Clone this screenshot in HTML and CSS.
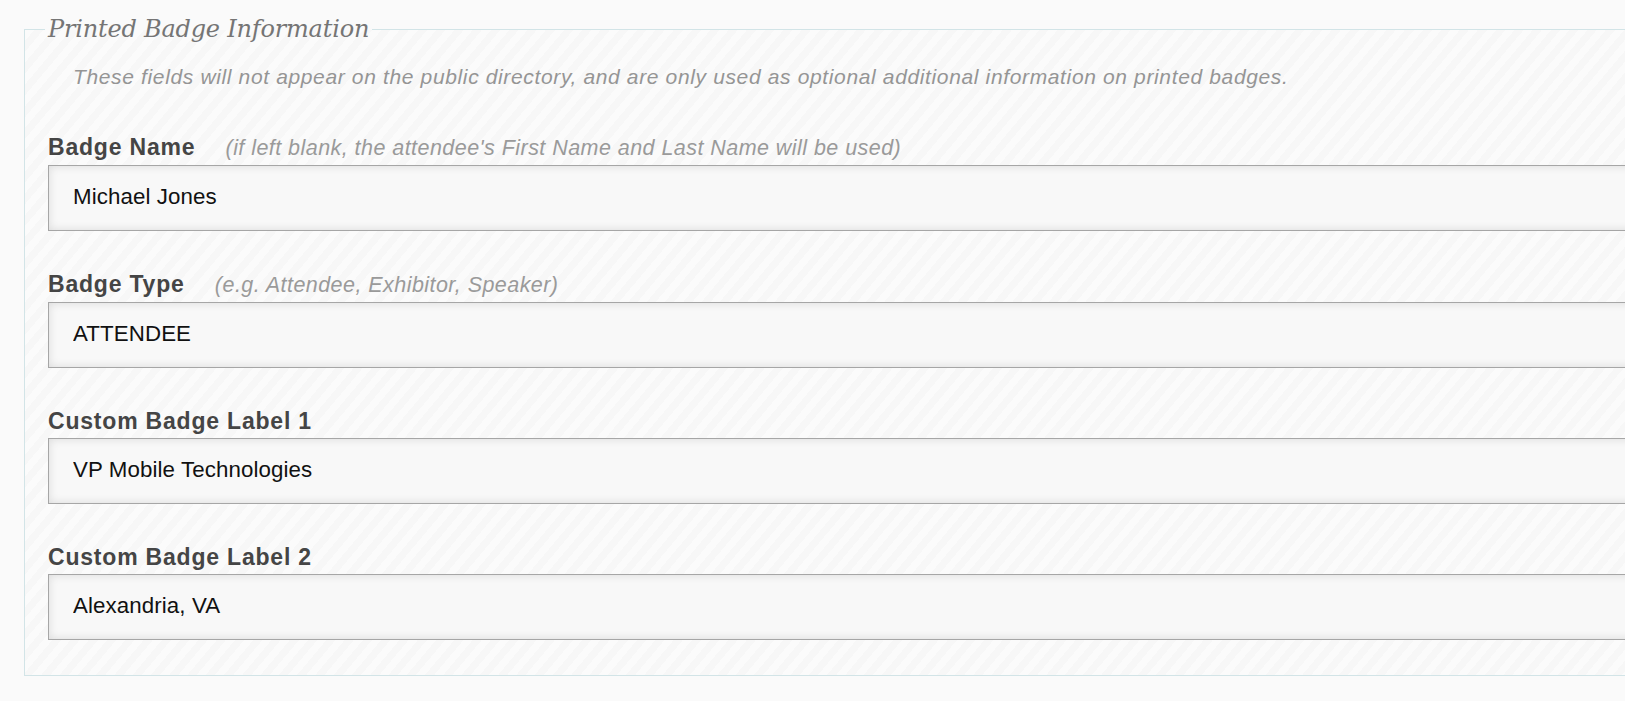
FILE: index.html
```html
<!DOCTYPE html>
<html lang="en">
<head>
<meta charset="utf-8">
<title>Printed Badge Information</title>
<link rel="stylesheet" href="styles.css">
</head>
<body>
<div class="page">
  <fieldset class="badge-box">
    <legend class="badge-legend">Printed Badge Information</legend>
    <p class="intro">These fields will not appear on the public directory, and are only used as optional additional information on printed badges.</p>

    <div class="field">
      <label class="field-label" for="badge-name">Badge Name <span class="hint">(if left blank, the attendee's First Name and Last Name will be used)</span></label>
      <input class="field-input" id="badge-name" type="text" value="Michael Jones">
    </div>

    <div class="field">
      <label class="field-label" for="badge-type">Badge Type <span class="hint">(e.g. Attendee, Exhibitor, Speaker)</span></label>
      <input class="field-input" id="badge-type" type="text" value="ATTENDEE">
    </div>

    <div class="field">
      <label class="field-label" for="badge-label-1">Custom Badge Label 1</label>
      <input class="field-input" id="badge-label-1" type="text" value="VP Mobile Technologies">
    </div>

    <div class="field">
      <label class="field-label" for="badge-label-2">Custom Badge Label 2</label>
      <input class="field-input" id="badge-label-2" type="text" value="Alexandria, VA">
    </div>
  </fieldset>
</div>
</body>
</html>
```

FILE: styles.css
```css
html, body {
  margin: 0;
  padding: 0;
  background: #fafafa;
  overflow: hidden;
}

.page {
  width: 1800px;
  padding: 15px 0 0 24px;
}

.badge-box {
  margin: 0;
  border: 1px solid #d2e4e7;
  padding: 0 0 35px 23px;
  background-color: #fafafa;
  background-image: repeating-linear-gradient(130deg, #fbfbfb 0 7px, #f7f7f7 7px 14px);
}

.badge-legend {
  margin-left: -3px;
  padding: 0 3px;
  font-family: "DejaVu Serif", "Liberation Serif", serif;
  font-style: italic;
  font-size: 24px;
  line-height: 28px;
  color: #757575;
  letter-spacing: -0.2px;
}

.intro {
  margin: 22px 0 0 0;
  padding-left: 25px;
  font-family: "Liberation Sans", Arial, sans-serif;
  font-style: italic;
  font-size: 21px;
  line-height: 24px;
  letter-spacing: 0.64px;
  color: #959595;
}

.field {
  margin-top: 37px;
}

.intro + .field {
  margin-top: 42px;
}

.field-label {
  display: block;
  margin-bottom: 0;
  font-family: "Liberation Sans", Arial, sans-serif;
  font-weight: bold;
  font-size: 23px;
  line-height: 33px;
  letter-spacing: 0.8px;
  color: #454545;
}

.hint {
  margin-left: 23px;
  font-weight: normal;
  font-style: italic;
  font-size: 21.5px;
  letter-spacing: 0.45px;
  color: #9a9a9a;
}

.field-input {
  display: block;
  box-sizing: border-box;
  width: 1700px;
  height: 66px;
  margin: 0;
  padding: 0 24px 3px;
  border: 1px solid #a6a6a6;
  border-radius: 0;
  background: #f8f8f8;
  box-shadow: inset 0 0 10px rgba(0, 0, 0, 0.12);
  font-family: "Liberation Sans", Arial, sans-serif;
  font-size: 22.3px;
  letter-spacing: 0.1px;
  color: #111;
  outline: none;
}
```
